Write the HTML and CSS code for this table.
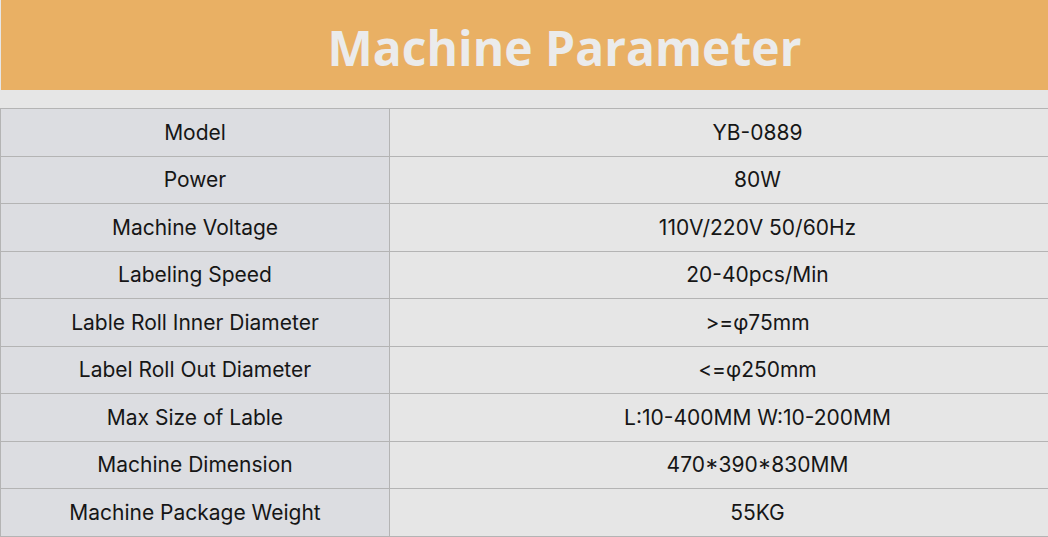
FILE: index.html
```html
<!DOCTYPE html>
<html>
<head>
<meta charset="utf-8">
<link rel="stylesheet" href="styles.css">
</head>
<body>
<div class="viewport">
<div class="page">
  <header class="banner"><h1 class="title">Machine Parameter</h1></header>
  <div class="gap"></div>
  <table class="params">
    <tr><td class="k">Model</td><td class="v">YB-0889</td></tr>
    <tr><td class="k">Power</td><td class="v">80W</td></tr>
    <tr><td class="k">Machine Voltage</td><td class="v">110V/220V 50/60Hz</td></tr>
    <tr><td class="k">Labeling Speed</td><td class="v">20-40pcs/Min</td></tr>
    <tr><td class="k">Lable Roll Inner Diameter</td><td class="v">&gt;=φ75mm</td></tr>
    <tr><td class="k">Label Roll Out Diameter</td><td class="v">&lt;=φ250mm</td></tr>
    <tr><td class="k">Max Size of Lable</td><td class="v">L:10-400MM W:10-200MM</td></tr>
    <tr><td class="k">Machine Dimension</td><td class="v">470*390*830MM</td></tr>
    <tr><td class="k">Machine Package Weight</td><td class="v">55KG</td></tr>
  </table>
</div>
</div>
</body>
</html>
```
FILE: styles.css
```css
html, body { margin: 0; padding: 0; background: #e6e6e6; overflow: hidden; }
.viewport { width: 1048px; height: 537px; overflow: hidden; }
.page { width: 1128px; background: #e6e6e6; }
.banner {
  height: 90px;
  margin-left: 1px;
  background: #e9b064;
  display: flex;
  align-items: center;
  justify-content: center;
  padding-top: 5px;
  box-sizing: border-box;
}
.title {
  margin: 0;
  font-family: "Open Sans", "Liberation Sans", sans-serif;
  font-weight: 700;
  font-size: 48px;
  color: #ebebeb;
}
.gap { height: 18px; }
.params {
  width: 1126px;
  border-collapse: collapse;
  font-family: Inter, "Noto Sans", sans-serif;
  font-size: 21px;
  color: #161616;
}
.params td {
  height: 47.5px;
  padding: 0;
  text-align: center;
  border: 1px solid #b4b4b4;
  box-sizing: border-box;
}
.params td.k { width: 389px; background: #dcdde1; }
.params td.v { background: #e6e6e6; }
```
